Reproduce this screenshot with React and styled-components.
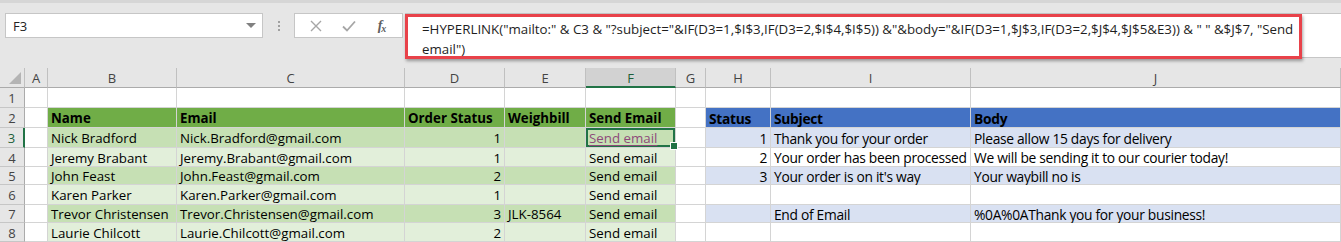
import React from 'react'
import styled, { createGlobalStyle } from 'styled-components'

const GlobalStyle = createGlobalStyle`
  html, body {
    margin: 0;
    padding: 0;
    background: #e6e6e6;
    overflow: hidden;
  }
  * { box-sizing: border-box; }
`

const Page = styled.div`
  width: 1341px;
  height: 242px;
  overflow: hidden;
  font-family: "Open Sans", "Noto Sans", sans-serif;
  color: #000;
  border-top: 3px solid #d6d6d6;
`

const FormulaBar = styled.div`
  display: flex;
  align-items: flex-start;
  height: 65px;
  padding: 10px 0 0 5px;
`

const NameBox = styled.div`
  width: 258px;
  height: 25px;
  background: #fff;
  border: 1px solid #c6c6c6;
  display: flex;
  align-items: center;
  justify-content: space-between;
  padding: 0 6px 0 7px;
  font-size: 13px;
  color: #222;
`

const Caret = styled.span`
  width: 0;
  height: 0;
  border-left: 5px solid transparent;
  border-right: 5px solid transparent;
  border-top: 5px solid #808080;
`

const Dots = styled.div`
  width: 31px;
  height: 25px;
  display: flex;
  flex-direction: column;
  align-items: center;
  justify-content: center;
  gap: 2px;

  span {
    width: 2px;
    height: 2px;
    background: #a0a0a0;
  }
`

const ButtonBox = styled.div`
  width: 109px;
  height: 25px;
  background: #fff;
  border: 1px solid #c6c6c6;
  display: flex;
  align-items: center;
  justify-content: space-around;
  padding: 0 4px;
`

const IconBtn = styled.span`
  width: 28px;
  display: flex;
  align-items: center;
  justify-content: center;
  color: #a6a6a6;
`

const Fx = styled.span`
  font-family: "Liberation Serif", "DejaVu Serif", serif;
  font-style: italic;
  font-weight: 700;
  font-size: 14px;
  color: #606060;
  letter-spacing: -1px;

  sub {
    font-size: 10px;
    vertical-align: -2px;
  }
`

const FormulaInput = styled.div`
  flex: 1;
  height: 45px;
  margin-left: 2px;
  background: #fff;
  border-top: 1px solid #c6c6c6;
  border-bottom: 1px solid #c6c6c6;
  display: flex;
`

const Highlight = styled.div`
  width: 897px;
  height: 45px;
  border: 3px solid #e8424a;
  box-shadow: 1px 2px 3px rgba(0, 0, 0, 0.35);
  padding: 2px 0 0 14px;
  font-size: 13.3px;
  line-height: 20px;
  color: #1e1e1e;
  white-space: nowrap;
`

const Sheet = styled.div`
  display: grid;
  grid-template-columns: 25px 23px 129px 228px 100px 81px 90px 30px 65px 200px 370px;
  grid-template-rows: 20px 20px 20px 20px 19px 18px 20px 18px 19px;
  background: #fff;
`

const Corner = styled.div`
  background: #e6e6e6;
  border-right: 1px solid #c0c0c0;
  border-bottom: 1px solid #ababab;
  position: relative;

  &::after {
    content: '';
    position: absolute;
    right: 3px;
    bottom: 3px;
    border-left: 12px solid transparent;
    border-bottom: 12px solid #b4b4b4;
  }
`

const ColHead = styled.div`
  background: ${p => (p.$active ? '#d2d2d2' : '#e6e6e6')};
  border-right: 1px solid #c0c0c0;
  border-bottom: ${p => (p.$active ? '2px solid #217346' : '1px solid #ababab')};
  display: flex;
  align-items: center;
  justify-content: center;
  font-size: 13px;
  color: ${p => (p.$active ? '#1d5f3a' : '#444')};
  padding-top: 1px;
`

const RowHead = styled.div`
  background: #e6e6e6;
  border-right: ${p => (p.$active ? '2px solid #217346' : '1px solid #ababab')};
  border-bottom: 1px solid #c6c6c6;
  display: flex;
  align-items: center;
  justify-content: center;
  font-size: 13px;
  color: ${p => (p.$active ? '#1d5f3a' : '#444')};
  padding-top: 1px;
`

const Cell = styled.div`
  position: relative;
  background: ${p => p.$bg || '#fff'};
  border-right: 1px solid #d4d4d4;
  border-bottom: 1px solid #d4d4d4;
  display: flex;
  align-items: center;
  justify-content: ${p => (p.$right ? 'flex-end' : 'flex-start')};
  padding: 1px 3px 0 3px;
  font-size: ${p => (p.$narrow ? '13.8px' : '13.3px')};
  font-weight: ${p => (p.$bold ? 700 : 400)};
  letter-spacing: ${p => (p.$narrow ? '-0.3px' : '0')};
  white-space: nowrap;
  overflow: visible;

  ${p => p.$selected && `
    box-shadow: inset 0 0 0 2px #217346;
    &::after {
      content: '';
      position: absolute;
      right: -3px;
      bottom: -3px;
      width: 6px;
      height: 6px;
      background: #217346;
      border: 1px solid #fff;
      z-index: 2;
    }
  `}
`

const Link = styled.span`
  color: #8e4a7a;
  text-decoration: underline;
  text-underline-offset: 2px;
`

const GREEN_HEAD = '#70ad47'
const GREEN_DARK = '#c6e0b4'
const GREEN_LIGHT = '#e2efda'
const BLUE_HEAD = '#4472c4'
const BLUE_LIGHT = '#d9e1f2'

const columns = ['A', 'B', 'C', 'D', 'E', 'F', 'G', 'H', 'I', 'J']

const people = [
  ['Nick Bradford', 'Nick.Bradford@gmail.com', '1', ''],
  ['Jeremy Brabant', 'Jeremy.Brabant@gmail.com', '1', ''],
  ['John Feast', 'John.Feast@gmail.com', '2', ''],
  ['Karen Parker', 'Karen.Parker@gmail.com', '1', ''],
  ['Trevor Christensen', 'Trevor.Christensen@gmail.com', '3', 'JLK-8564'],
  ['Laurie Chilcott', 'Laurie.Chilcott@gmail.com', '2', ''],
]

const lookup = [
  ['1', 'Thank you for your order', 'Please allow 15 days for delivery'],
  ['2', 'Your order has been processed', 'We will be sending it to our courier today!'],
  ['3', "Your order is on it's way", 'Your waybill no is'],
  ['', '', ''],
  ['', 'End of Email', '%0A%0AThank you for your business!'],
  ['', '', ''],
]

const XIcon = () => (
  <svg width="12" height="12" viewBox="0 0 12 12">
    <path d="M1 1 L11 11 M11 1 L1 11" stroke="#a6a6a6" strokeWidth="1.4" fill="none" />
  </svg>
)

const CheckIcon = () => (
  <svg width="14" height="12" viewBox="0 0 14 12">
    <path d="M1 6.5 L5 10.5 L13 1.5" stroke="#a6a6a6" strokeWidth="1.8" fill="none" />
  </svg>
)

export default function App() {
  return (
    <Page>
      <GlobalStyle />
      <FormulaBar>
        <NameBox>
          F3
          <Caret />
        </NameBox>
        <Dots>
          <span />
          <span />
          <span />
        </Dots>
        <ButtonBox>
          <IconBtn><XIcon /></IconBtn>
          <IconBtn><CheckIcon /></IconBtn>
          <IconBtn><Fx>f<sub>x</sub></Fx></IconBtn>
        </ButtonBox>
        <FormulaInput>
          <Highlight>
            =HYPERLINK("mailto:" &amp; C3 &amp; "?subject="&amp;IF(D3=1,$I$3,IF(D3=2,$I$4,$I$5)) &amp;"&amp;body="&amp;IF(D3=1,$J$3,IF(D3=2,$J$4,$J$5&amp;E3)) &amp; " " &amp;$J$7, "Send
            <br />
            email")
          </Highlight>
        </FormulaInput>
      </FormulaBar>

      <Sheet>
        <Corner />
        {columns.map(c => (
          <ColHead key={c} $active={c === 'F'}>{c}</ColHead>
        ))}

        <RowHead>1</RowHead>
        {columns.map(c => <Cell key={c} />)}

        <RowHead>2</RowHead>
        <Cell />
        <Cell $bg={GREEN_HEAD} $bold>Name</Cell>
        <Cell $bg={GREEN_HEAD} $bold>Email</Cell>
        <Cell $bg={GREEN_HEAD} $bold>Order Status</Cell>
        <Cell $bg={GREEN_HEAD} $bold>Weighbill</Cell>
        <Cell $bg={GREEN_HEAD} $bold>Send Email</Cell>
        <Cell />
        <Cell $bg={BLUE_HEAD} $bold $narrow>Status</Cell>
        <Cell $bg={BLUE_HEAD} $bold $narrow>Subject</Cell>
        <Cell $bg={BLUE_HEAD} $bold $narrow>Body</Cell>

        {people.map((p, i) => {
          const green = i % 2 === 0 ? GREEN_DARK : GREEN_LIGHT
          const blue = i % 2 === 0 ? BLUE_LIGHT : '#fff'
          const [status, subject, body] = lookup[i]
          return (
            <React.Fragment key={p[0]}>
              <RowHead $active={i === 0}>{i + 3}</RowHead>
              <Cell />
              <Cell $bg={green}>{p[0]}</Cell>
              <Cell $bg={green}>{p[1]}</Cell>
              <Cell $bg={green} $right>{p[2]}</Cell>
              <Cell $bg={green}>{p[3]}</Cell>
              <Cell $bg={green} $selected={i === 0}>
                {i === 0 ? <Link>Send email</Link> : 'Send email'}
              </Cell>
              <Cell />
              <Cell $bg={blue} $right $narrow>{status}</Cell>
              <Cell $bg={blue} $narrow>{subject}</Cell>
              <Cell $bg={blue} $narrow>{body}</Cell>
            </React.Fragment>
          )
        })}
      </Sheet>
    </Page>
  )
}
